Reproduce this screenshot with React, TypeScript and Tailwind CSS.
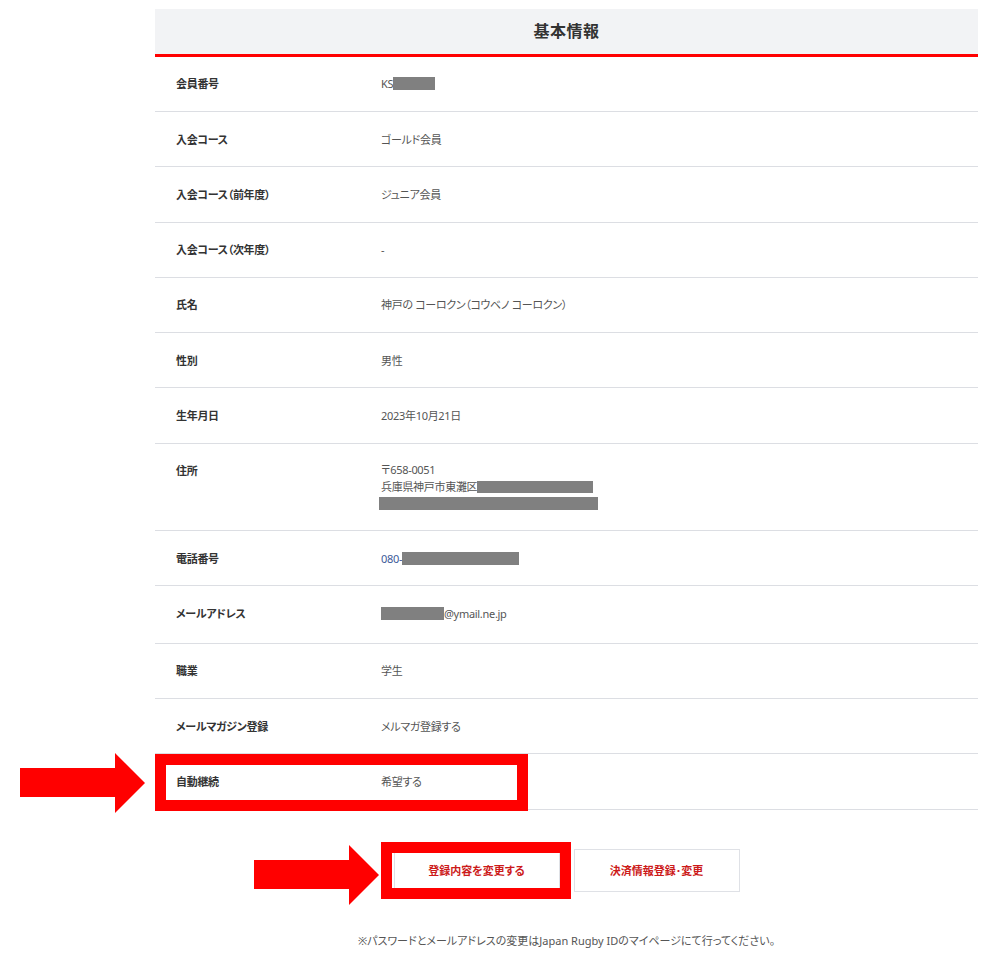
import React from 'react';

type Row = {
  label: string;
  value: React.ReactNode;
  highlight?: boolean;
};

// grey block used to mask personal data
const Mask = ({ w, h = 'h-[13px]' }: { w: string; h?: string }) => (
  <span className={`inline-block align-middle bg-[#808080] ${w} ${h}`} />
);

// thick red pointer used as an annotation
function RedArrow({ className }: { className: string }) {
  return (
    <svg className={className} width="126" height="60" viewBox="0 0 126 60">
      <polygon points="0,15 95,15 95,0 125,30 95,60 95,44 0,44" fill="#ff0000" />
    </svg>
  );
}

const rows: Row[] = [
  {
    label: '会員番号',
    value: (
      <span className="inline-flex items-center">
        KS
        <Mask w="w-[42px]" />
      </span>
    ),
  },
  { label: '入会コース', value: 'ゴールド会員' },
  { label: '入会コース（前年度）', value: 'ジュニア会員' },
  { label: '入会コース（次年度）', value: '-' },
  { label: '氏名', value: '神戸の コーロクン（コウベノ コーロクン）' },
  { label: '性別', value: '男性' },
  { label: '生年月日', value: '2023年10月21日' },
  {
    label: '住所',
    value: (
      <div className="flex flex-col leading-[16.4px]">
        <span>〒658-0051</span>
        <span className="flex items-center">
          兵庫県神戸市東灘区
          <Mask w="w-[116px]" h="h-[12px]" />
        </span>
        <span className="flex items-center h-[16.4px] -ml-[2px]">
          <Mask w="w-[219px]" />
        </span>
      </div>
    ),
  },
  {
    label: '電話番号',
    value: (
      <span className="inline-flex items-center text-[#3d5a99]">
        080-
        <Mask w="w-[117px]" />
      </span>
    ),
  },
  {
    label: 'メールアドレス',
    value: (
      <span className="inline-flex items-center">
        <Mask w="w-[63px]" />
        @ymail.ne.jp
      </span>
    ),
  },
  { label: '職業', value: '学生' },
  { label: 'メールマガジン登録', value: 'メルマガ登録する' },
  { label: '自動継続', value: '希望する', highlight: true },
];

export default function App() {
  return (
    <div
      className="min-h-[954px] w-[984px] bg-white text-[11px] leading-[17px] [font-feature-settings:'palt'] pt-[9px] pl-[155px]"
      style={{ fontFamily: '"Noto Sans", "Noto Sans CJK JP", sans-serif' }}
    >
      <div className="w-[823px]">
        {/* section title */}
        <div className="h-[47.7px] bg-[#f2f3f5] border-b-[3px] border-[#ff0000] flex items-center justify-center">
          <h2 className="text-[16px] font-bold text-[#333] tracking-[0.5px]">基本情報</h2>
        </div>

        {rows.map((row) => (
          <div key={row.label} className="relative flex border-b border-[#dcdee3] tracking-[-0.3px]">
            <div className="w-[206px] shrink-0 pl-[21px] py-[18.65px] font-bold text-[#333]">
              {row.label}
            </div>
            <div className="pl-[20px] py-[18.65px] text-[#555]">{row.value}</div>
            {row.highlight && (
              <>
                <div className="absolute left-0 top-0 w-[373px] h-[57px] border-[11px] border-[#ff0000] pointer-events-none" />
                <RedArrow className="absolute left-[-135px] top-[-1px]" />
              </>
            )}
          </div>
        ))}

        {/* actions */}
        <div className="flex justify-center gap-[14px] mt-[39px]">
          <div className="relative">
            <button className="w-[166px] h-[43px] bg-white border border-[#dfe1e6] text-[#cc1a1a] font-bold">
              登録内容を変更する
            </button>
            <div className="absolute left-[-13px] top-[-7px] w-[190px] h-[57px] border-[11px] border-[#ff0000] pointer-events-none" />
            <RedArrow className="absolute left-[-140px] top-[-4px]" />
          </div>
          <button className="w-[166px] h-[43px] bg-white border border-[#dfe1e6] text-[#cc1a1a] font-bold">
            決済情報登録･変更
          </button>
        </div>

        <p className="mt-[40px] text-center text-[11px] text-[#555]">
          ※パスワードとメールアドレスの変更はJapan Rugby IDのマイページにて行ってください。
        </p>
      </div>
    </div>
  );
}
